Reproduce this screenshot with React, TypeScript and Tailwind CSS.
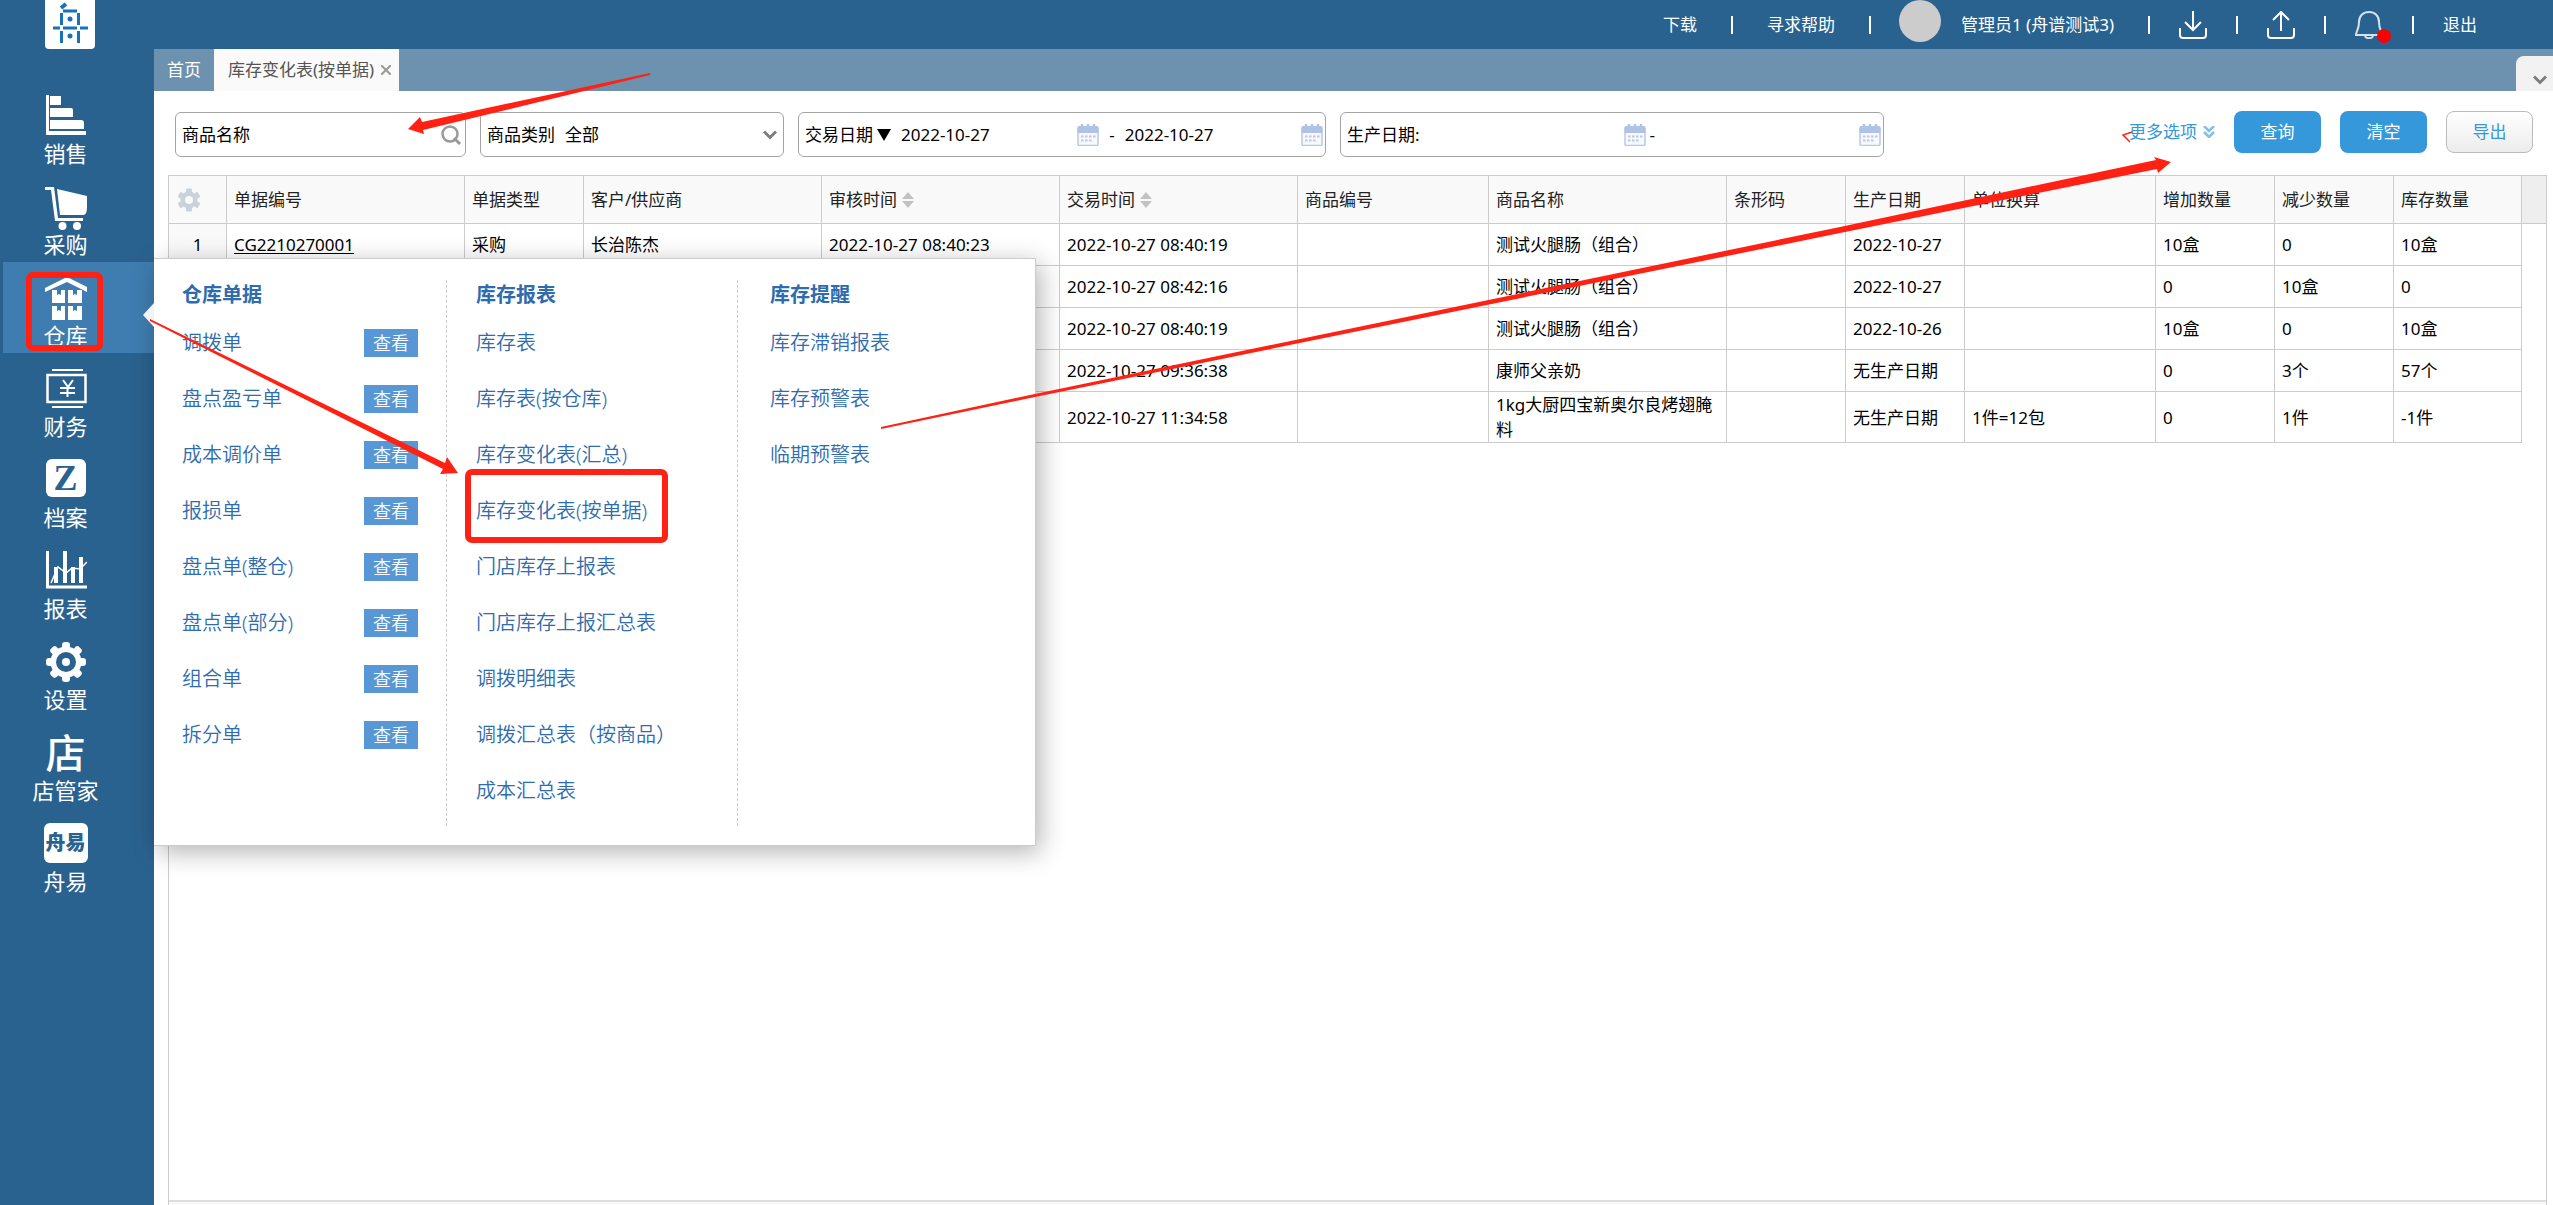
import type { ReactNode } from "react";
import clsx from "clsx";

const SalesIcon = () => (
  <svg viewBox="0 0 42 42" className="h-[42px] w-[42px]" fill="currentColor">
    <path d="M1 0h3v36h37v4H1z" />
    <path d="M5 1h11v9H5zM5 13h21a2 2 0 0 1 2 2v7H5zM5 25h31a3 3 0 0 1 3 3v6H5z" />
  </svg>
);

const CartIcon = () => (
  <svg viewBox="0 0 42 44" className="h-[44px] w-[42px]" fill="currentColor">
    <path d="M0 1h9l4 31h25v3H10L6 4H0z" />
    <path d="M12 3l30 7v10c0 6-1 9-4 9H15z" />
    <circle cx="17.500" cy="40" r="4" />
    <circle cx="32" cy="40" r="4" />
  </svg>
);

const WarehouseIcon = () => (
  <svg viewBox="0 0 42 44" className="h-[44px] w-[42px]" fill="currentColor">
    <path d="M0 11L22 0l20 10v5L22 5 0 15z" />
    <path d="M7 13h5v5l2-1 2 1v-5h4v13H7zM23 13h5v5l2-1 2 1v-5h5v13H23z" />
    <path d="M7 29h5v5l2-1 2 1v-5h4v14H7zM23 29h5v5l2-1 2 1v-5h5v14H23z" />
  </svg>
);

const FinanceIcon = () => (
  <svg viewBox="0 0 42 42" className="h-[42px] w-[42px]" fill="none" stroke="currentColor">
    <path d="M7 2h31M7 39h31" strokeWidth="2" />
    <rect x="2.500" y="7" width="38" height="27" strokeWidth="2.500" />
    <path d="M18 12l5 7 5-7M15 20h15M15 25h15M22.500 19v10" strokeWidth="2" />
  </svg>
);

const ReportIcon = () => (
  <svg viewBox="0 0 42 42" className="h-[42px] w-[42px]" fill="none" stroke="currentColor">
    <path d="M2.500 1v36H42" strokeWidth="3" />
    <path d="M11 33V17M20 33V1M28 33V17M36 33V7" strokeWidth="4" />
    <path d="M6 33l7-16 8 6 6-5 8 1 7-7" strokeWidth="1.500" />
  </svg>
);

const SettingsIcon = () => (
  <svg viewBox="-21 -21 42 42" className="h-[42px] w-[42px]">
    <g fill="currentColor">
      <circle r="15.500" />
      <rect x="-4" y="-20" width="8" height="40" rx="3" />
      <rect x="-4" y="-20" width="8" height="40" rx="3" transform="rotate(45)" />
      <rect x="-4" y="-20" width="8" height="40" rx="3" transform="rotate(90)" />
      <rect x="-4" y="-20" width="8" height="40" rx="3" transform="rotate(135)" />
    </g>
    <circle r="10" fill="#2a628f" />
    <circle r="4" fill="currentColor" />
  </svg>
);

const TableGear = () => (
  <svg viewBox="-12 -12 24 24" className="h-6 w-6">
    <g fill="#c9d2da">
      <circle r="8.500" />
      <rect x="-3" y="-11.500" width="6" height="23" rx="1" />
      <rect x="-3" y="-11.500" width="6" height="23" rx="1" transform="rotate(60)" />
      <rect x="-3" y="-11.500" width="6" height="23" rx="1" transform="rotate(120)" />
    </g>
    <circle r="4" fill="#f9f9f9" />
  </svg>
);

const CalendarIcon = () => (
  <svg viewBox="0 0 22 22" className="h-[22px] w-[22px]">
    <rect x="1" y="3" width="20" height="18.500" rx="1.500" fill="#f7f9fd" stroke="#b9c9e8" strokeWidth="1.500" />
    <path d="M0.500 9V4a2 2 0 0 1 2-2h17a2 2 0 0 1 2 2v5z" fill="#b0c2e6" />
    <path d="M5 0v4M11 0v4M17 0v4" stroke="#b0c2e6" strokeWidth="2.500" />
    <path d="M4 12.500h15M4 16.500h11" stroke="#b9c9e8" strokeWidth="2" strokeDasharray="2.500 1.500" />
  </svg>
);

const ChevronIcon = ({ className }: { className?: string }) => (
  <svg viewBox="0 0 14 10" className={clsx("h-[10px] w-[14px]", className)} fill="none" stroke="#7d7d7d" strokeWidth="3">
    <path d="M1 1.500l6 6 6-6" />
  </svg>
);

const SortIcon = () => (
  <svg viewBox="0 0 12 16" className="h-4 w-3" fill="#c2c2c2">
    <path d="M6 0l6 7H0zM0 9h12l-6 7z" />
  </svg>
);

const navItems: { label: string; icon: ReactNode; active?: boolean }[] = [
  { label: "销售", icon: <SalesIcon /> },
  { label: "采购", icon: <CartIcon /> },
  { label: "仓库", icon: <WarehouseIcon />, active: true },
  { label: "财务", icon: <FinanceIcon /> },
  {
    label: "档案",
    icon: (
      <span className="flex h-[38px] w-10 items-center justify-center rounded-md bg-white font-['Liberation_Serif',serif] text-[36px] leading-none font-bold text-[#2a628f]">
        Z
      </span>
    ),
  },
  { label: "报表", icon: <ReportIcon /> },
  { label: "设置", icon: <SettingsIcon /> },
  { label: "店管家", icon: <span className="text-[40px] leading-[42px] font-medium">店</span> },
  {
    label: "舟易",
    icon: (
      <span className="flex h-10 w-[44px] items-center justify-center rounded-md bg-white text-[20px] leading-none font-black text-[#2a628f]">
        舟易
      </span>
    ),
  },
];

const documents = ["调拨单", "盘点盈亏单", "成本调价单", "报损单", "盘点单(整仓)", "盘点单(部分)", "组合单", "拆分单"];
const reports = [
  "库存表",
  "库存表(按仓库)",
  "库存变化表(汇总)",
  "库存变化表(按单据)",
  "门店库存上报表",
  "门店库存上报汇总表",
  "调拨明细表",
  "调拨汇总表（按商品）",
  "成本汇总表",
];
const alerts = ["库存滞销报表", "库存预警表", "临期预警表"];

const columns = [
  { title: "单据编号", width: "w-[238px]" },
  { title: "单据类型", width: "w-[119px]" },
  { title: "客户/供应商", width: "w-[238px]" },
  { title: "审核时间", width: "w-[238px]", sortable: true },
  { title: "交易时间", width: "w-[238px]", sortable: true },
  { title: "商品编号", width: "w-[191px]" },
  { title: "商品名称", width: "w-[238px]" },
  { title: "条形码", width: "w-[119px]" },
  { title: "生产日期", width: "w-[119px]" },
  { title: "单位换算", width: "w-[191px]" },
  { title: "增加数量", width: "w-[119px]" },
  { title: "减少数量", width: "w-[119px]" },
  { title: "库存数量", width: "w-[128px]" },
];

const rows = [
  ["CG2210270001", "采购", "长治陈杰", "2022-10-27 08:40:23", "2022-10-27 08:40:19", "", "测试火腿肠（组合）", "", "2022-10-27", "", "10盒", "0", "10盒"],
  ["", "", "", "", "2022-10-27 08:42:16", "", "测试火腿肠（组合）", "", "2022-10-27", "", "0", "10盒", "0"],
  ["", "", "", "", "2022-10-27 08:40:19", "", "测试火腿肠（组合）", "", "2022-10-26", "", "10盒", "0", "10盒"],
  ["", "", "", "", "2022-10-27 09:36:38", "", "康师父亲奶", "", "无生产日期", "", "0", "3个", "57个"],
  ["", "", "", "", "2022-10-27 11:34:58", "", "1kg大厨四宝新奥尔良烤翅腌料", "", "无生产日期", "1件=12包", "0", "1件", "-1件"],
];

function Sidebar() {
  return (
    <aside className="w-[154px] shrink-0 bg-[#2a628f] text-white">
      <div className="flex h-20 items-start pl-[45px]">
        <svg viewBox="0 0 50 49" className="h-[49px] w-[50px]" fill="none" stroke="#1673b8" strokeWidth="3">
          <path d="M0 0h50v45a4 4 0 0 1-4 4H4a4 4 0 0 1-4-4z" fill="#fff" stroke="none" />
          <path d="M16 8l5-4" strokeWidth="4" />
          <path d="M18 11h14M16.500 13v12M33.500 13v12M8 28h7M18 28h14M35 28h8M16.500 31v12M33.500 31v12" />
          <circle cx="25" cy="19" r="2.500" fill="#1673b8" stroke="none" />
          <circle cx="25" cy="36" r="2.500" fill="#1673b8" stroke="none" />
        </svg>
      </div>
      <nav className="pl-[3px]">
        {navItems.map((item) => (
          <a
            key={item.label}
            href="#"
            className={clsx("flex h-[91px] flex-col items-center pt-[15px] pr-[26px]", item.active && "bg-[#3f7db0]")}
          >
            <span className="flex h-[44px] items-start">{item.icon}</span>
            <span className="text-[22px] leading-7">{item.label}</span>
          </a>
        ))}
      </nav>
    </aside>
  );
}

const Divider = () => <span className="h-[18px] w-[2px] bg-white" />;

function TopBar() {
  return (
    <header className="flex h-[49px] items-start justify-end bg-[#2a628f] pr-[76px] text-[17px] text-white">
      <div className="flex h-[49px] items-center gap-[34px]">
        <a href="#">下载</a>
        <Divider />
        <a href="#">寻求帮助</a>
        <Divider />
      </div>
      <span className="mr-5 ml-7 h-[42px] w-[42px] rounded-full bg-[#ccc]" />
      <div className="flex h-[49px] items-center">
        <span className="mr-[34px]">管理员1 (舟谱测试3)</span>
        <Divider />
        <button type="button" aria-label="下载列表" className="mx-[29px]">
          <svg viewBox="0 0 28 28" className="h-7 w-7" fill="none" stroke="currentColor" strokeWidth="2">
            <path d="M14 0v19M6 11l8 8 8-8M1 17v7a3 3 0 0 0 3 3h20a3 3 0 0 0 3-3v-7" />
          </svg>
        </button>
        <Divider />
        <button type="button" aria-label="上传列表" className="mx-[29px]">
          <svg viewBox="0 0 28 28" className="h-7 w-7" fill="none" stroke="currentColor" strokeWidth="2">
            <path d="M14 20V1M6 9l8-8 8 8M1 17v7a3 3 0 0 0 3 3h20a3 3 0 0 0 3-3v-7" />
          </svg>
        </button>
        <Divider />
        <button type="button" aria-label="消息" className="relative mx-[29px]">
          <svg viewBox="0 0 28 28" className="h-7 w-7" fill="none" stroke="#d5e2ed" strokeWidth="2">
            <path d="M14 1c-6 0-10 4-10 10 0 8-3 9-3 13h26c0-4-3-5-3-13 0-6-4-10-10-10zM10 25c1 3 7 3 8 0" />
          </svg>
          <span className="absolute -right-2 -bottom-1 h-[14px] w-[14px] rounded-full bg-[#f00]" />
        </button>
        <Divider />
        <a href="#" className="ml-[29px]">退出</a>
      </div>
    </header>
  );
}

function Tabs() {
  return (
    <div className="flex h-[42px] items-end bg-[#6d92b0] text-[17px]">
      <button type="button" className="h-full px-[13px] text-white">首页</button>
      <div className="flex h-full items-center gap-[7px] bg-[#fafafa] pr-2 pl-[14px] text-[#555]">
        <span>库存变化表(按单据)</span>
        <button type="button" aria-label="关闭">
          <svg viewBox="0 0 10 10" className="h-[10px] w-[10px]" stroke="#999" strokeWidth="2">
            <path d="M0 0l10 10M10 0L0 10" />
          </svg>
        </button>
      </div>
      <button type="button" aria-label="更多标签" className="ml-auto flex h-[35px] w-[37px] items-center rounded-tl-lg bg-[#f2f2f2] pt-3 pl-[17px]">
        <ChevronIcon />
      </button>
    </div>
  );
}

const box = "flex h-[45px] items-center rounded-md border border-[#a3a3a3] bg-white";

function DateInput({ label, value }: { label: string; value?: string }) {
  return (
    <span className="flex min-w-0 flex-1 items-center">
      <input type="text" aria-label={label} defaultValue={value} className="min-w-0 flex-1 outline-none" />
      <button type="button" aria-label={`${label} 日历`}>
        <CalendarIcon />
      </button>
    </span>
  );
}

function Filters() {
  return (
    <div className="flex items-start pt-[21px] pr-5 pb-[18px] pl-[21px] text-[17px] text-black">
      <div className="flex min-w-0 flex-1 gap-[14px]">
        <div className={clsx(box, "w-[291px] pr-1 pl-[6px]")}>
          <label htmlFor="product">商品名称</label>
          <input id="product" type="text" className="min-w-0 flex-1 outline-none" />
          <button type="button" aria-label="搜索">
            <svg viewBox="0 0 20 20" className="h-5 w-5" fill="none" stroke="#999" strokeWidth="2.500">
              <circle cx="9" cy="9" r="7.500" />
              <path d="M13 13l6 6" strokeWidth="3" />
            </svg>
          </button>
        </div>
        <div className={clsx(box, "relative w-[304px] pl-[6px]")}>
          <label htmlFor="category">商品类别</label>
          <select id="category" className="h-full flex-1 appearance-none bg-transparent pl-[10px] outline-none">
            <option>全部</option>
          </select>
          <ChevronIcon className="pointer-events-none absolute right-[6px]" />
        </div>
        <div className={clsx(box, "w-[528px] pr-[2px] pl-[6px]")}>
          <button type="button" className="mr-[10px] flex items-center gap-1">
            交易日期
            <svg viewBox="0 0 14 12" className="h-3 w-[14px]">
              <path d="M0 0h14L7 12z" />
            </svg>
          </button>
          <DateInput label="交易日期起" value="2022-10-27" />
          <span className="mx-[10px]">-</span>
          <DateInput label="交易日期止" value="2022-10-27" />
        </div>
        <div className={clsx(box, "w-[544px] pr-[2px] pl-[6px]")}>
          <span>生产日期:</span>
          <DateInput label="生产日期起" />
          <span className="ml-1">-</span>
          <DateInput label="生产日期止" />
        </div>
      </div>
      <div className="-mt-px flex h-[42px] items-center gap-[19px]">
        <button type="button" className="flex items-center gap-[6px] text-[#3498db]">
          更多选项
          <svg viewBox="0 0 12 12" className="h-3 w-3" fill="none" stroke="#7fbfe8" strokeWidth="2.500">
            <path d="M1 0l5 5 5-5M1 6l5 5 5-5" />
          </svg>
        </button>
        <button type="button" className="h-full w-[87px] rounded-lg bg-[#3498db] text-white">查询</button>
        <button type="button" className="h-full w-[87px] rounded-lg bg-[#3498db] text-white">清空</button>
        <button type="button" className="h-full w-[87px] rounded-lg border border-[#bbb] bg-linear-to-b from-white to-[#ececec] text-[#3498db]">
          导出
        </button>
      </div>
    </div>
  );
}

function StockTable() {
  return (
    <div className="mr-[6px] ml-[14px] flex flex-1 flex-col border border-b-0 border-[#ccc]">
      <table className="w-full table-fixed border-separate border-spacing-0 text-left text-[17px] text-black">
        <thead>
          <tr className="h-12 bg-[#f9f9f9] text-[#222]">
            <th scope="col" className="w-[58px] border-r border-b border-[#ccc] pl-2">
              <button type="button" aria-label="列设置" className="block">
                <TableGear />
              </button>
            </th>
            {columns.map((column) => (
              <th key={column.title} scope="col" className={clsx("border-r border-b border-[#ccc] px-[7px] font-normal", column.width)}>
                <span className="flex items-center gap-[5px]">
                  {column.title}
                  {column.sortable && <SortIcon />}
                </span>
              </th>
            ))}
            <td className="border-b border-[#ccc] bg-[#eee]" />
          </tr>
        </thead>
        <tbody>
          {rows.map((row, index) => (
            <tr key={index} className="h-[42px]">
              <td className="border-r border-b border-[#ccc] bg-[#f9f9f9] text-center">{row[0] && index + 1}</td>
              {row.map((cell, i) => (
                <td key={i} className="border-r border-b border-[#ccc] px-[7px] leading-[25px]">
                  {i === 0 && cell ? <a href="#" className="underline underline-offset-2">{cell}</a> : cell}
                </td>
              ))}
              <td />
            </tr>
          ))}
        </tbody>
      </table>
      <div className="mt-auto h-[5px] border-t-2 border-[#ddd] bg-[#f9f9f9]" />
    </div>
  );
}

const MenuTitle = ({ children }: { children: ReactNode }) => (
  <h2 className="h-[35px] text-[20px] leading-[30px] font-bold">{children}</h2>
);

function WarehouseMenu() {
  return (
    <div className="absolute top-[258px] left-[154px] flex w-[882px] border border-l-0 border-[#ccc] bg-white pt-[21px] pb-[19px] text-[20px] font-[350] text-[#2e6cad] shadow-[4px_6px_24px_rgba(0,0,0,0.3)]">
      <svg viewBox="0 0 11 24" className="absolute top-[44px] -left-[11px] h-6 w-[11px]" fill="#f3f3f3">
        <path d="M11 0v24L0 12z" />
      </svg>
      <section className="w-[293px] border-r border-dashed border-[#ccc] pr-7 pb-[7px] pl-7">
        <MenuTitle>仓库单据</MenuTitle>
        {documents.map((item) => (
          <div key={item} className="flex h-14 items-center justify-between">
            <a href="#">{item}</a>
            <button type="button" className="h-7 w-[54px] bg-[#5897d6] text-[18px] leading-7 text-white">查看</button>
          </div>
        ))}
      </section>
      <section className="w-[291px] border-r border-dashed border-[#ccc] pb-[7px] pl-[29px]">
        <MenuTitle>库存报表</MenuTitle>
        {reports.map((item) => (
          <a key={item} href="#" className="flex h-14 items-center">{item}</a>
        ))}
      </section>
      <section className="pl-8">
        <MenuTitle>库存提醒</MenuTitle>
        {alerts.map((item) => (
          <a key={item} href="#" className="flex h-14 items-center">{item}</a>
        ))}
      </section>
    </div>
  );
}

// hand-drawn red guide marks over the page
function Annotations() {
  return (
    <svg className="pointer-events-none absolute top-0 left-0 h-full w-full" fill="#ff2113">
      <rect x="29" y="275" width="71" height="73" rx="4" fill="none" stroke="#ff2113" strokeWidth="6" />
      <rect x="468" y="472" width="197" height="68" rx="4" fill="none" stroke="#ff2113" strokeWidth="6" />
      <path d="M650 73L422 122 420 117 408 129 424 134 423 130 650 75z" />
      <path d="M150 319L445 463 447 457 458 473 440 474 443 469 150 321z" />
      <path d="M881 427L1030 395 1840 227 2156 160 2154 157 2171 162 2158 173 2157 169 1840 233 1030 398 881 429z" />
      <path d="M2132 132l-9 3 7 7" fill="none" stroke="#ff2113" strokeWidth="1.500" />
    </svg>
  );
}

export default function App() {
  return (
    <div className="relative flex min-h-screen overflow-hidden bg-white font-['Noto_Sans','Noto_Sans_CJK_SC',sans-serif]">
      <Sidebar />
      <main className="flex min-w-0 flex-1 flex-col">
        <TopBar />
        <Tabs />
        <Filters />
        <StockTable />
      </main>
      <WarehouseMenu />
      <Annotations />
    </div>
  );
}
